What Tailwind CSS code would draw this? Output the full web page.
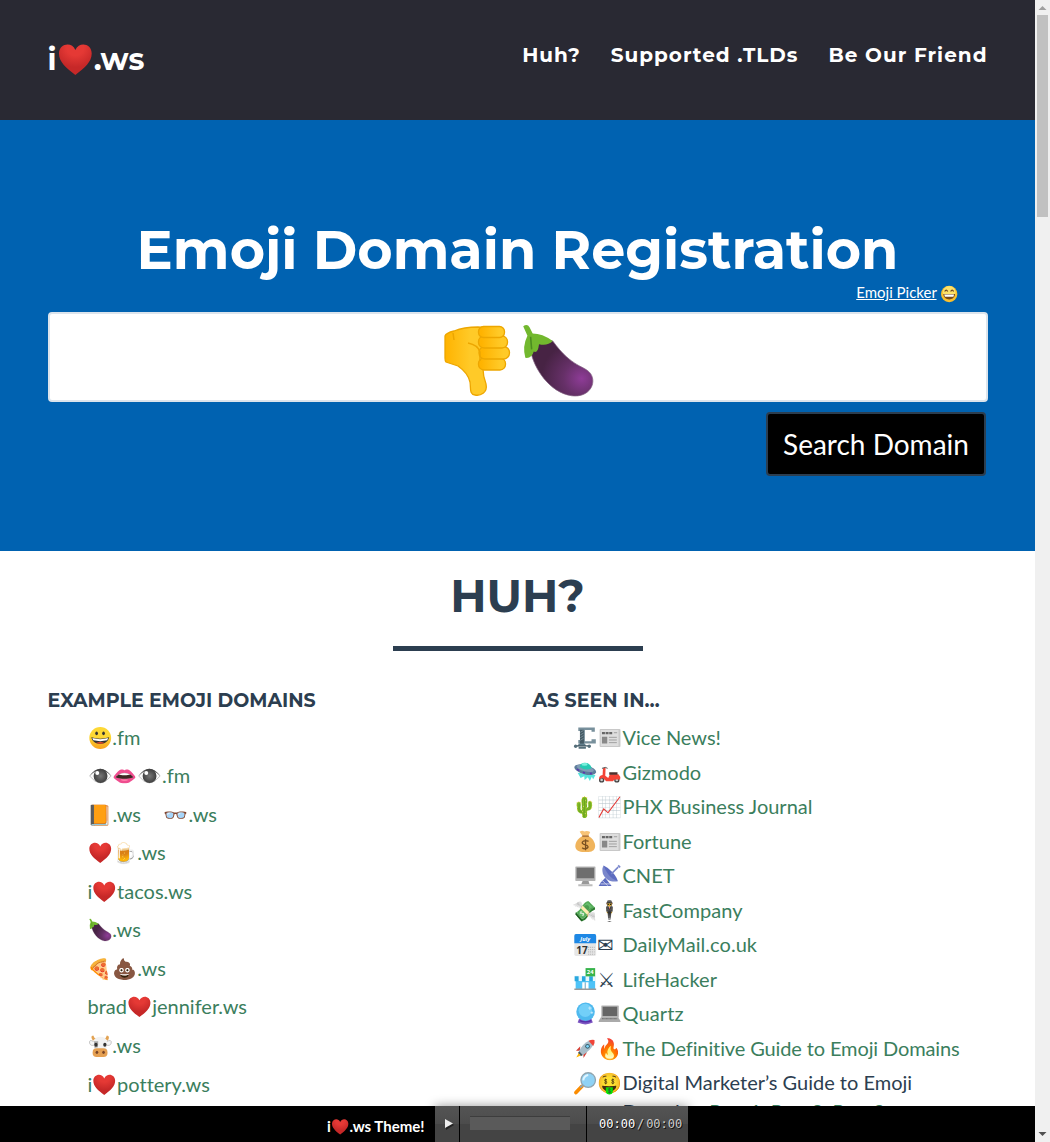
<!DOCTYPE html>
<html lang="en">
<head>
<meta charset="utf-8">
<title>i❤️.ws</title>
<script src="https://cdn.jsdelivr.net/npm/@tailwindcss/browser@4"></script>
</head>
<body class="h-[1142px] overflow-hidden flex bg-white text-[#2c3e50] text-[20px] font-['Lato','Noto_Color_Emoji',sans-serif]">
<!-- Emoji artwork shared by the lists and the search field -->
<svg class="absolute w-0 h-0" aria-hidden="true">
  <defs>
    <radialGradient id="gHeart" cx=".5" cy=".1" r=".65"><stop offset=".4" stop-color="#e53935"/><stop offset="1" stop-color="#c62828"/></radialGradient>
    <linearGradient id="gFace" x2="0" y2="1"><stop offset=".45" stop-color="#fdd835"/><stop offset="1" stop-color="#f9a01b"/></linearGradient>
    <radialGradient id="gEgg" cx=".82" cy=".7" r=".65"><stop offset="0" stop-color="#8e3c97"/><stop offset=".45" stop-color="#663068"/><stop offset="1" stop-color="#472344"/></radialGradient>
    <radialGradient id="gIris"><stop offset="0" stop-color="#777"/><stop offset="1" stop-color="#3f3f3f"/></radialGradient>
    <linearGradient id="gThumb"><stop offset="0" stop-color="#ffb300"/><stop offset=".55" stop-color="#ffca28"/></linearGradient>
    <linearGradient id="gFinger"><stop offset=".1" stop-color="#ffb300"/><stop offset=".8" stop-color="#ffca28"/></linearGradient>
    <symbol id="heart" viewBox="0 0 75 72"><path d="M37 66C18 52 4 40 4 23 4 3 30-2 37 16 45-2 70 3 70 23 70 40 56 52 37 66Z" fill="url(#gHeart)"/></symbol>
    <symbol id="grin" viewBox="0 0 75 72"><circle cx="37" cy="36" r="33" fill="url(#gFace)"/><ellipse cx="26" cy="22" rx="4" ry="6" fill="#333"/><ellipse cx="47" cy="22" rx="4" ry="6" fill="#333"/><path d="M10 34Q37 42 64 34C59 61 15 61 10 34Z" fill="#333"/><path d="M13 36Q37 43 61 36L58 43Q37 48 16 43Z" fill="#fff"/><path d="M24 51Q37 45 50 51Q37 56 24 51Z" fill="#e84a2a"/></symbol>
    <symbol id="smile" viewBox="0 0 75 72"><circle cx="37" cy="36" r="33" fill="#fbc02d"/><circle cx="37" cy="30" r="26" fill="#fde26a"/><path d="M19 26Q25 15 31 26M43 26Q49 15 55 26" fill="none" stroke="#704320" stroke-width="5"/><path d="M13 36H61C59 65 15 65 13 36Z" fill="#7a4b18"/><path d="M17 38H57L54 47H20Z" fill="#fff"/></symbol>
    <symbol id="eye" viewBox="0 0 75 72"><path d="M5 36Q37-6 70 36Q37 78 5 36Z" fill="#fafafa" stroke="#aaa" stroke-width="2"/><path d="M4 36Q37-8 71 36Q37 1 4 36" fill="#555"/><circle cx="38" cy="36" r="21" fill="url(#gIris)"/><circle cx="28" cy="27" r="6" fill="#fff"/></symbol>
    <symbol id="eggplant" viewBox="0 0 75 72"><path d="M11 26C14 43 29 66 50 69 67 71 74 57 68 48 62 40 51 43 32 17L18 14Z" fill="url(#gEgg)" stroke="#806080" stroke-width=".7"/><path d="M4 3Q8 0 10 4L13 10Q22 10 32 17Q27 22 19 20Q18 29 14 27Q12 34 6 33Q3 22 8 12Z" fill="#72b82e"/><path d="M11 13L12 25" stroke="#4b8c20" stroke-width="1.500"/></symbol>
    <symbol id="cow" viewBox="0 0 75 72"><path d="M15 20Q5 5 16 4Q18 12 25 13M60 20Q68 5 57 4Q55 12 49 13" fill="#e2a354"/><path d="M18 23Q2 14 5 28Q8 37 20 33M55 23Q73 14 70 28Q67 37 55 33" fill="#f5f5f5" stroke="#aaa" stroke-width="2"/><path d="M17 20Q22 8 37 8 53 8 57 20L56 48H19Z" fill="#f2f2f2"/><path d="M18 22L31 22 30 40 20 42Z" fill="#aaa"/><ellipse cx="24" cy="32" rx="5" ry="6" fill="#333"/><ellipse cx="51" cy="32" rx="5" ry="6" fill="#333"/><rect x="14" y="43" width="45" height="26" rx="12" fill="#e5a052"/><ellipse cx="27" cy="55" rx="4" ry="5" fill="#794527"/><ellipse cx="47" cy="55" rx="4" ry="5" fill="#794527"/></symbol>
    <symbol id="clamp" viewBox="0 0 75 72"><path d="M16 4H66V17H56V12H36V46H56V40H69V53H16V42H22V15H16Z" fill="#78909c"/><path d="M21 11H33V58H21Z" fill="#455a64"/><path d="M22 19L32 13M22 27L32 21M22 35L32 29M22 43L32 37" stroke="#90a4ae" stroke-width="2"/><path d="M18 53H36L40 61H13Z" fill="#607d8b"/><path d="M5 60H53" stroke="#455a64" stroke-width="4"/><circle cx="8" cy="61" r="5" fill="#546e7a"/><circle cx="49" cy="61" r="5" fill="#546e7a"/><path d="M17 66H39" stroke="#546e7a" stroke-width="5"/></symbol>
    <symbol id="ufo" viewBox="0 0 75 72"><path d="M14 35L68 42L61 55L57 47 51 60 45 49 35 57 34 46 23 51Z" fill="#56e3dc"/><ellipse cx="37" cy="26" rx="34" ry="14" transform="rotate(15 37 26)" fill="#5c7c9b"/><ellipse cx="37" cy="22" rx="27" ry="9" transform="rotate(15 37 22)" fill="#829cb6"/><path d="M20 18C22-1 54 2 56 22Q39 31 20 18Z" fill="#26cab3"/><ellipse cx="35" cy="10" rx="9" ry="4" fill="#79f0dc"/><path d="M12 24L18 29M30 34L36 36M51 38L57 37" stroke="#5e35b1" stroke-width="5"/></symbol>
    <symbol id="scooter" viewBox="0 0 75 72"><circle cx="14" cy="57" r="8" fill="#444"/><circle cx="60" cy="57" r="8" fill="#444"/><circle cx="14" cy="57" r="4" fill="#ccc"/><circle cx="60" cy="57" r="4" fill="#ccc"/><path d="M18 22L26 20L25 44 34 51 39 40H65Q72 46 70 56H53L48 61H28L17 50 7 55Q4 44 17 42Z" fill="#f44336"/><path d="M37 34H62V41H37Z" fill="#4c302d"/><path d="M15 22L25 19L32 22" stroke="#555" stroke-width="3" fill="none"/></symbol>
    <symbol id="bag" viewBox="0 0 75 72"><path d="M29 18C3 30-3 66 28 66H47C76 66 71 31 47 18Z" fill="#f0b45c"/><path d="M20 5Q28 0 34 4 43 0 52 6L46 18H29Z" fill="#f7c377"/><path d="M28 18H48" stroke="#9c6534" stroke-width="4"/><path d="M47 34Q40 30 32 33 23 39 33 43L42 46Q51 53 37 57 30 57 28 53M38 28V61" fill="none" stroke="#795021" stroke-width="4"/></symbol>
    <symbol id="monitor" viewBox="0 0 75 72"><rect x="7" y="7" width="61" height="44" rx="2" fill="#b4b4b4"/><path d="M11 11H64V43H11Z" fill="#6e6e6e"/><path d="M29 51H47L50 61H25Z" fill="#999"/><path d="M16 61H59V67H16Z" fill="#bcbcbc"/></symbol>
    <symbol id="dish" viewBox="0 0 75 72"><path d="M25 41L44 66H5L12 55Z" fill="#5c6bc0"/><path d="M14 48L32 65M11 60H40" stroke="#c5cae9" stroke-width="3"/><path d="M20 4C8 23 25 59 63 52Z" fill="#7986cb"/><path d="M20 4Q34 10 47 25T63 52Q43 44 34 31T20 4Z" fill="#5c6bc0"/><path d="M43 30L64 9M64 4L70 10" stroke="#7986cb" stroke-width="5"/></symbol>
    <symbol id="calendar" viewBox="0 0 75 72"><rect x="4" y="3" width="66" height="66" rx="5" fill="#e6e6e6"/><path d="M9 3H65Q70 3 70 9V31H4V9Q4 3 9 3" fill="#1e88e5"/><text x="37" y="23" text-anchor="middle" font-family="Open Sans" font-style="italic" font-weight="bold" font-size="17" fill="#fff">July</text><text x="27" y="62" text-anchor="middle" font-family="Open Sans" font-weight="bold" font-size="30" fill="#333">17</text><path d="M46 43H66M46 50H66M46 57H66M46 64H66" stroke="#aaa" stroke-width="3" stroke-dasharray="3 3"/></symbol>
    <symbol id="store" viewBox="0 0 75 72"><path d="M8 34H67V63H8Z" fill="#4fc3f7"/><path d="M4 23H70L69 39H5Z" fill="#e8f7fc"/><path d="M5 25H17V40H5ZM27 25H38V40H27ZM49 25H60V40H49Z" fill="#29a8df"/><rect x="38" y="0" width="29" height="25" fill="#36b34a"/><text x="52" y="18" text-anchor="middle" font-family="Open Sans" font-weight="bold" font-size="18" fill="#fff">24</text><path d="M28 43H47V64H28Z" fill="#fff"/><path d="M37 43V64" stroke="#1478a8" stroke-width="2"/><path d="M4 64H70" stroke="#999" stroke-width="4"/></symbol>
    <symbol id="crystal" viewBox="0 0 75 72"><path d="M18 51H56L60 62Q38 73 14 62Z" fill="#7e57c2"/><circle cx="38" cy="29" r="28" fill="#4fb9ee"/><circle cx="37" cy="25" r="20" fill="#72cff8"/><path d="M51 13V24M46 18H57M57 28V36M53 32H61" stroke="#e1f5fe" stroke-width="2"/><path d="M20 56Q38 64 55 56" stroke="#512da8" stroke-width="4" fill="none"/></symbol>
    <symbol id="laptop" viewBox="0 0 75 72"><rect x="13" y="10" width="53" height="37" rx="2" fill="#b4b4b4"/><path d="M17 14H61V42H17Z" fill="#656565"/><path d="M12 46H64L71 57V60H5V57Z" fill="#aaa"/><path d="M15 50H61" stroke="#777" stroke-width="4" stroke-dasharray="3 1"/></symbol>
    <symbol id="news" viewBox="0 0 75 72"><rect x="8" y="9" width="63" height="54" rx="3" fill="#c8c8c8"/><path d="M11 12H65V60H11Z" fill="#dedede"/><path d="M15 21H47" stroke="#666" stroke-width="7" stroke-dasharray="9 2"/><path d="M15 32H31V53H15Z" fill="#888"/><path d="M36 34H60M36 42H60M36 50H60M51 20H61" stroke="#a0a0a0" stroke-width="3"/></symbol>
    <symbol id="rocket" viewBox="0 0 75 72"><path d="M22 28L9 41 21 41M43 45L32 63 31 50" fill="#d64238"/><path d="M18 43Q29 20 48 11L62 10 61 24Q51 42 30 54Z" fill="#a8bdc9"/><path d="M47 11Q58 6 65 9 67 18 61 27Z" fill="#f04438"/><circle cx="44" cy="28" r="7" fill="#37616f"/><circle cx="44" cy="28" r="4" fill="#80d8ff"/><path d="M19 43L30 54 24 58 15 48Z" fill="#455a64"/><path d="M17 49L23 56 10 62Z" fill="#ffb300"/></symbol>
    <symbol id="magnifier" viewBox="0 0 75 72"><path d="M9 65L27 46" stroke="#fb8c00" stroke-width="11" stroke-linecap="round"/><path d="M22 50L32 40" stroke="#90a4ae" stroke-width="6"/><circle cx="46" cy="27" r="22" fill="#8fd2f5" stroke="#90a4ae" stroke-width="4"/><path d="M31 28Q33 14 46 12" stroke="#dff5ff" stroke-width="6" fill="none"/></symbol>
    <symbol id="thumbdown" viewBox="0 0 67 72"><g stroke="#eda600" stroke-width="1.300"><path d="M10 6Q20 2 34 2L47 3V42L39 44Q39 51 42 59C44 68 36 71 31 70C25 69 27 63 26 57Q24 48 14 41L2 37Q1 36 1 33V11Q2 8 10 6Z" fill="url(#gThumb)"/><rect x="34.500" y="33" width="27" height="12" rx="5.500" fill="url(#gFinger)"/><rect x="35" y="21.500" width="30.500" height="12.500" rx="6" fill="url(#gFinger)"/><rect x="34.500" y="11" width="29" height="12" rx="5.500" fill="url(#gFinger)"/><rect x="34.500" y="1.500" width="26" height="11" rx="5" fill="url(#gFinger)"/></g><path d="M24 18Q34 20 36 27V36M9 8L10 15" fill="none" stroke="#eda600" stroke-width="1.500"/></symbol>
  </defs>
</svg>
<div class="w-[1035px] h-[1142px] flex flex-col overflow-hidden">
  <header class="h-[120px] shrink-0 bg-[#292933] text-white flex justify-between px-[47.5px] font-['Montserrat','Noto_Color_Emoji',sans-serif] font-bold">
    <a class="text-[30px] leading-[40px] mt-[40px] whitespace-nowrap">i<svg class="inline w-[1.24em] h-[1.2em] align-[-.25em]"><use href="#heart"/></svg>.ws</a>
    <nav class="flex gap-[30px] text-[20px] leading-[30px] tracking-[1px] mt-[40px] whitespace-nowrap"><a>Huh?</a><a>Supported .TLDs</a><a>Be Our Friend</a></nav>
  </header>
  <section class="h-[431px] shrink-0 bg-[#0062b1] text-white px-[47.5px] flex flex-col">
    <h1 class="mt-[99px] h-[61px] leading-[62px] text-[54px] font-bold text-center whitespace-nowrap font-['Montserrat',sans-serif]">Emoji Domain Registration</h1>
    <div class="h-[32px] text-[15px] leading-[25px] text-right pr-[28.5px]"><a class="underline">Emoji Picker</a> <svg class="inline w-[1.24em] h-[1.2em] align-[-.3em]"><use href="#smile"/></svg></div>
    <div class="h-[90px] w-[940px] shrink-0 rounded bg-white border-2 border-[#dce4ec] flex items-center justify-center gap-[8px] pl-[7px] pt-[7px]"><svg class="w-[67px] h-[72px]"><use href="#thumbdown"/></svg><svg class="w-[79px] h-[76px]"><use href="#eggplant"/></svg></div>
    <button class="self-end mr-[1.5px] mt-[10px] w-[220px] h-[64px] shrink-0 rounded bg-black border-2 border-[#2c3e50] text-[28px]">Search Domain</button>
  </section>
  <main class="h-[555px] shrink-0 overflow-hidden px-[47.5px] flex flex-col">
    <h2 class="mt-[18px] h-[54px] leading-[54px] text-[45px] font-bold text-center font-['Montserrat',sans-serif]">HUH?</h2>
    <hr class="w-[250px] mx-auto border-0 h-[5px] bg-[#2c3e50] mt-[23px] shrink-0">
    <div class="grid grid-cols-[485px_455px] mt-[39px]">
      <div>
        <h3 class="text-[19px] leading-[22px] font-bold font-['Montserrat',sans-serif]">EXAMPLE EMOJI DOMAINS</h3>
        <ul class="pl-[40px] mt-[5.6px] text-[#3b7e5d] leading-[38.55px]">
          <li class="h-[38.55px]"><svg class="inline w-[1.24em] h-[1.2em] align-[-.25em]"><use href="#grin"/></svg>.fm</li>
          <li class="h-[38.55px]"><svg class="inline w-[1.24em] h-[1.2em] align-[-.25em]"><use href="#eye"/></svg>👄<svg class="inline w-[1.24em] h-[1.2em] align-[-.25em]"><use href="#eye"/></svg>.fm</li>
          <li class="h-[38.55px] flex gap-[22.5px]"><span>📙.ws</span><span>👓.ws</span></li>
          <li class="h-[38.55px]"><svg class="inline w-[1.24em] h-[1.2em] align-[-.25em]"><use href="#heart"/></svg>🍺.ws</li>
          <li class="h-[38.55px]">i<svg class="inline w-[1.24em] h-[1.2em] align-[-.25em]"><use href="#heart"/></svg>tacos.ws</li>
          <li class="h-[38.55px]"><svg class="inline w-[1.24em] h-[1.2em] align-[-.25em]"><use href="#eggplant"/></svg>.ws</li>
          <li class="h-[38.55px]">🍕💩.ws</li>
          <li class="h-[38.55px]">brad<svg class="inline w-[1.26em] h-[1.2em] align-[-.25em]"><use href="#heart"/></svg>jennifer.ws</li>
          <li class="h-[38.55px]"><svg class="inline w-[1.24em] h-[1.2em] align-[-.25em]"><use href="#cow"/></svg>.ws</li>
          <li class="h-[38.55px]">i<svg class="inline w-[1.24em] h-[1.2em] align-[-.25em]"><use href="#heart"/></svg><span class="[font-variant-ligatures:none]">pottery.ws</span></li>
        </ul>
      </div>
      <div>
        <h3 class="text-[19px] leading-[22px] font-bold font-['Montserrat',sans-serif]">AS SEEN IN…</h3>
        <ul class="pl-[40px] mt-[8px] leading-[34.55px] text-[#3b7e5d] whitespace-nowrap">
          <li class="h-[34.55px] flex"><span class="w-[50px]"><svg class="inline w-[1.24em] h-[1.2em] align-[-.25em]"><use href="#clamp"/></svg><svg class="inline w-[1.24em] h-[1.2em] align-[-.25em]"><use href="#news"/></svg></span>Vice News!</li>
          <li class="h-[34.55px] flex"><span class="w-[50px]"><svg class="inline w-[1.24em] h-[1.2em] align-[-.25em]"><use href="#ufo"/></svg><svg class="inline w-[1.24em] h-[1.2em] align-[-.25em]"><use href="#scooter"/></svg></span>Gizmodo</li>
          <li class="h-[34.55px] flex"><span class="w-[50px]">🌵📈</span>PHX Business Journal</li>
          <li class="h-[34.55px] flex"><span class="w-[50px]"><svg class="inline w-[1.24em] h-[1.2em] align-[-.25em]"><use href="#bag"/></svg><svg class="inline w-[1.24em] h-[1.2em] align-[-.25em]"><use href="#news"/></svg></span>Fortune</li>
          <li class="h-[34.55px] flex"><span class="w-[50px]"><svg class="inline w-[1.24em] h-[1.2em] align-[-.25em]"><use href="#monitor"/></svg><svg class="inline w-[1.24em] h-[1.2em] align-[-.25em]"><use href="#dish"/></svg></span>CNET</li>
          <li class="h-[34.55px] flex"><span class="w-[50px]">💸🕴️</span><span class="tracking-[.12px]">FastCompany</span></li>
          <li class="h-[34.55px] flex"><span class="w-[50px] text-[#2c3e50]"><svg class="inline w-[1.24em] h-[1.2em] align-[-.25em]"><use href="#calendar"/></svg><span class="font-['DejaVu_Sans']">✉</span></span><span class="tracking-[.06px]">DailyMail.co.uk</span></li>
          <li class="h-[34.55px] flex"><span class="w-[50px] text-[#2c3e50]"><svg class="inline w-[1.24em] h-[1.2em] align-[-.25em]"><use href="#store"/></svg><span class="font-['DejaVu_Sans']">⚔</span></span><span class="tracking-[.06px]">LifeHacker</span></li>
          <li class="h-[34.55px] flex"><span class="w-[50px]"><svg class="inline w-[1.24em] h-[1.2em] align-[-.25em]"><use href="#crystal"/></svg><svg class="inline w-[1.24em] h-[1.2em] align-[-.25em]"><use href="#laptop"/></svg></span><span class="tracking-[.12px]">Quartz</span></li>
          <li class="h-[34.55px] flex"><span class="w-[50px]"><svg class="inline w-[1.24em] h-[1.2em] align-[-.25em]"><use href="#rocket"/></svg>🔥</span><span class="tracking-[-.12px]">The Definitive Guide to Emoji Domains</span></li>
          <li class="flex leading-[28.5px] pt-[3px] text-[#2c3e50]"><span class="w-[50px]"><svg class="inline w-[1.24em] h-[1.2em] align-[-.25em]"><use href="#magnifier"/></svg>🤑</span><span>Digital Marketer’s Guide to Emoji<br><span class="tracking-[-.1px]">Domains: <a class="text-[#3b7e5d]">Part 1</a>, <a class="text-[#3b7e5d]">Part 2</a>, <a class="text-[#3b7e5d]">Part 3</a></span></span></li>
        </ul>
      </div>
    </div>
  </main>
  <footer class="h-[36px] shrink-0 bg-black text-white flex">
    <div class="w-[435px] text-right pr-[10.5px] text-[15px] leading-[40px] font-bold">i<svg class="inline w-[1.24em] h-[1.2em] align-[-.25em]"><use href="#heart"/></svg>.ws Theme!</div>
    <div class="flex h-[36px] bg-linear-to-b from-[#545454] from-0% via-[#4c4c4c] via-50% to-[#444444] to-50% shadow-[0_0_10px_rgba(0,0,0,0.4)]">
      <div class="w-[25px] border-r border-black"><svg class="mt-[12px] ml-[9px]" width="10" height="12"><path d="M2 2l8 5-8 5z" fill="#222"/><path d="M1 1l8 4.500-8 4.500z" fill="#eee"/></svg></div>
      <div class="w-[127px] border-r border-black pl-[10px] pt-[10px]"><div class="w-[100px] h-[14px] bg-[#5a5a5a] border-t border-[#3d3d3d]"></div></div>
      <div class="w-[101px] pl-[12px] leading-[36px] text-[12px] font-['DejaVu_Sans_Mono',monospace] text-white [text-shadow:1px_1px_0_#111] flex"><span>00:00</span><span class="w-[11px] text-center text-[#ccc]">/</span><span class="text-[#ccc]">00:00</span></div>
    </div>
  </footer>
</div>
<aside class="w-[15px] h-[1142px] bg-[#f0f0f0] flex flex-col">
  <svg width="15" height="15"><path d="M3.500 10L7.500 6l4 4z" fill="#a0a0a0"/></svg>
  <div class="w-[11px] ml-[2px] h-[202px] bg-[#c1c1c1]"></div>
  <svg class="mt-auto" width="15" height="15"><path d="M3.500 5h8l-4 4z" fill="#505050"/></svg>
</aside>
</body>
</html>
